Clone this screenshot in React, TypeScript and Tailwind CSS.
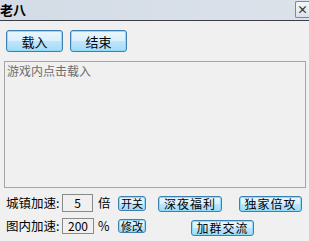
import React from "react";

const font = { fontFamily: '"Noto Sans CJK SC", "Liberation Sans", sans-serif' };

const Btn = ({ label, className }: { label: string; className: string }) => (
  <button
    className={`flex shrink-0 items-center justify-center whitespace-nowrap rounded-[3px] border border-[#3c7fb1] bg-[linear-gradient(#eaf6fd_0%,#d9f0fc_50%,#bee6fd_51%,#a7d9f5_100%)] text-black leading-none shadow-[inset_0_0_0_1px_#8fdcf8] ${className}`}
  >
    {label}
  </button>
);

const NumBox = ({ value, className }: { value: string; className: string }) => (
  <div
    className={`flex shrink-0 items-center justify-center border border-[#8a8a8a] bg-[#f0f0f0] text-[12px] leading-none text-black ${className}`}
  >
    {value}
  </div>
);

export default function App() {
  return (
    <div className="h-[241px] w-[309px] overflow-hidden bg-[#f0f0f0]" style={font}>
      {/* Title bar */}
      <div className="flex h-[21px] items-start justify-between border-b border-[#3a3f47] bg-[linear-gradient(90deg,#d3dbe6,#dbe2ea)]">
        <span className="pt-[2px] text-[13px] font-bold leading-[16px] text-black">老八</span>
        <div className="mt-[1px] flex h-[17px] w-[14px] items-center justify-center rounded-l-[2px] border border-r-0 border-[#7f8896] bg-[linear-gradient(#f4f6f9,#dce2ea)] text-[11px] font-bold leading-none text-[#333]">
          ×
        </div>
      </div>

      {/* Top buttons */}
      <div className="ml-[6px] mt-[9px] flex gap-[7px]">
        <Btn label="载入" className="h-[22px] w-[57px] text-[13px]" />
        <Btn label="结束" className="h-[22px] w-[57px] text-[13px]" />
      </div>

      {/* Log area */}
      <div className="ml-[4px] mt-[9px] h-[127px] w-[302px] border border-[#a5a5a5] bg-[#f0f0f0] px-[2px] pt-[2px] text-[12px] leading-[14px] text-[#6d6d6d]">
        游戏内点击载入
      </div>

      {/* Controls */}
      <div className="mt-[6px] flex flex-col gap-[6px] text-[12.5px] text-black">
        <div className="flex h-[18px] items-center">
          <span className="ml-[6px] w-[56px] shrink-0 whitespace-nowrap leading-none">城镇加速:</span>
          <NumBox value="5" className="h-[18px] w-[31px]" />
          <span className="ml-[5px] w-[20px] shrink-0 leading-none">倍</span>
          <Btn label="开关" className="h-[15px] w-[28px] text-[11px]" />
          <Btn label="深夜福利" className="ml-[12px] mt-[2px] h-[16px] w-[64px] text-[12px] tracking-[1px]" />
          <Btn label="独家倍攻" className="ml-[17px] mt-[2px] h-[16px] w-[63px] text-[12px] tracking-[1px]" />
        </div>
        <div className="flex h-[16px] items-center">
          <span className="ml-[6px] w-[56px] shrink-0 whitespace-nowrap leading-none">图内加速:</span>
          <NumBox value="200" className="h-[16px] w-[32px]" />
          <span className="ml-[4px] w-[20px] shrink-0 leading-none">%</span>
          <Btn label="修改" className="h-[14px] w-[28px] text-[11px]" />
          <Btn label="加群交流" className="ml-[45px] mt-[4px] h-[16px] w-[63px] text-[12px] tracking-[1px]" />
        </div>
      </div>
    </div>
  );
}
